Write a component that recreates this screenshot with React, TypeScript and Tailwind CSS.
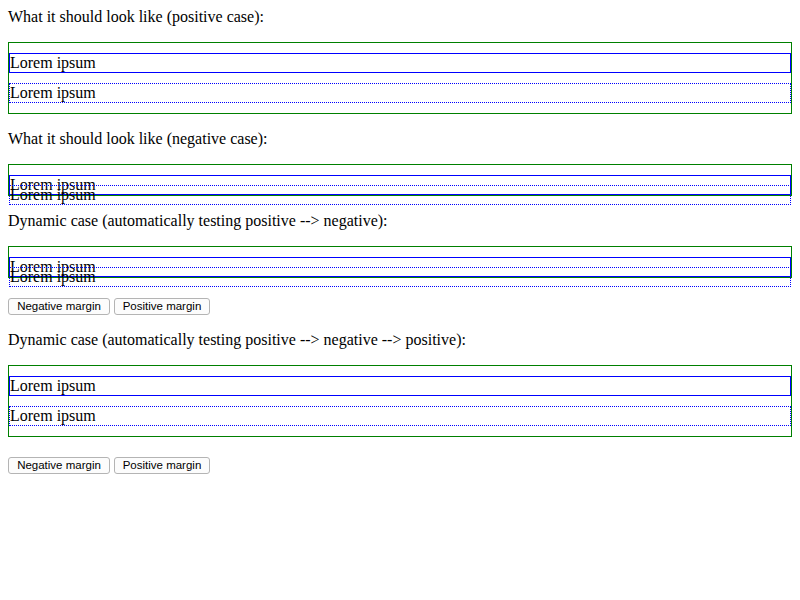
import { useState } from 'react';

const MarginBox = ({ negative }: { negative: boolean }) => (
  <div className="mt-4 flex flex-col border border-[#008000]">
    <div className="mt-[10px] h-[20px] border border-[#0000ff]">Lorem ipsum</div>
    <div
      className={
        negative
          ? 'mt-[-10px] mb-[-10px] h-[20px] border border-dotted border-[#0000ff]'
          : 'my-[10px] h-[20px] border border-dotted border-[#0000ff]'
      }
    >
      Lorem ipsum
    </div>
  </div>
);

const Buttons = ({ onSet }: { onSet: (neg: boolean) => void }) => (
  <div className="mt-4 flex h-[21px] items-start gap-1 pt-1">
    <button
      onClick={() => onSet(true)}
      className="h-[17px] w-[102px] rounded-[3px] border border-[#b4b4b4] bg-[#fcfcfc] font-['Liberation_Sans',Arial,sans-serif] text-[11.5px] leading-none text-black"
    >
      Negative margin
    </button>
    <button
      onClick={() => onSet(false)}
      className="h-[17px] w-[96px] rounded-[3px] border border-[#b4b4b4] bg-[#fcfcfc] font-['Liberation_Sans',Arial,sans-serif] text-[11.5px] leading-none text-black"
    >
      Positive margin
    </button>
  </div>
);

export default function App() {
  const [firstNeg, setFirstNeg] = useState(true);
  const [secondNeg, setSecondNeg] = useState(false);

  return (
    <div className="min-h-[600px] bg-white p-2 font-['Liberation_Serif','Times_New_Roman',serif] text-[16px] leading-[18px] text-black">
      <div>What it should look like (positive case):</div>
      <MarginBox negative={false} />

      <div className="mt-4">What it should look like (negative case):</div>
      <MarginBox negative={true} />

      <div className="mt-4">Dynamic case (automatically testing positive --&gt; negative):</div>
      <MarginBox negative={firstNeg} />
      <Buttons onSet={setFirstNeg} />

      <div className="mt-4">Dynamic case (automatically testing positive --&gt; negative --&gt; positive):</div>
      <MarginBox negative={secondNeg} />
      <Buttons onSet={setSecondNeg} />
    </div>
  );
}
